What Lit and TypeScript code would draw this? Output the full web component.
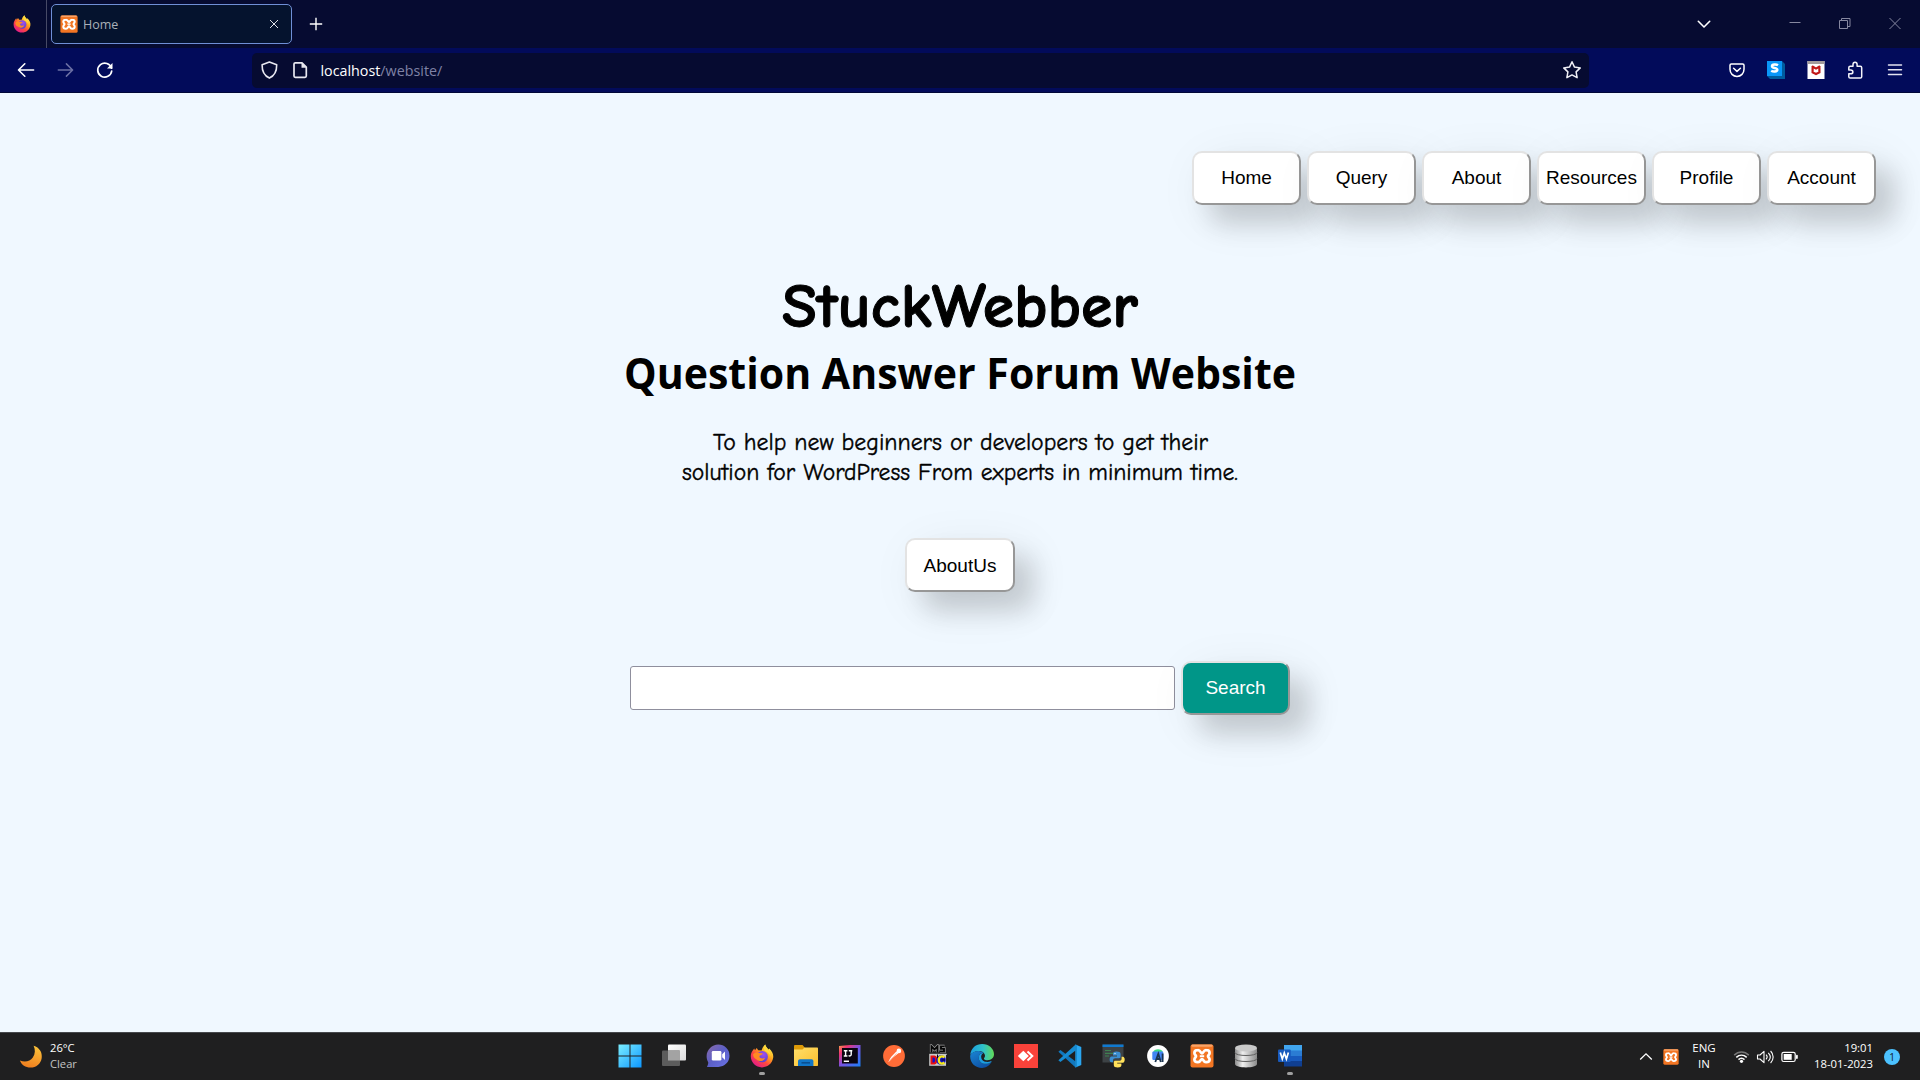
import { LitElement, html, css, svg } from "lit";
import { customElement, property } from "lit/decorators.js";

const icons: Record<string, unknown> = {
  firefox: svg`
    <defs>
      <linearGradient id="fx" x1="0.85" y1="0.1" x2="0.2" y2="0.95"><stop offset="0" stop-color="#fff44f"/><stop offset="0.35" stop-color="#ffa41c"/><stop offset="0.62" stop-color="#ff4a3d"/><stop offset="1" stop-color="#e2198b"/></linearGradient>
      <radialGradient id="fp" cx="0.6" cy="0.3" r="0.8"><stop offset="0" stop-color="#a04ff0"/><stop offset="1" stop-color="#4a3fc8"/></radialGradient>
    </defs>
    <path fill="url(#fx)" d="M2.2 7.2 4.2 4.4 5 6.2 6.7 4 8.2 6.2 11.6 6.4 C12.2 4 13.2 2.2 15.3 0.4 C15.6 2.6 16.8 3.6 18.6 5.4 L19.2 4.4 C22.4 7.6 23.6 10.4 23.2 13.6 C22.4 19.4 17.8 23.4 12 23.4 C5.800 23.4 1 18.600 0.8 12.600 C0.800 10.400 1.200 8.800 2.200 7.200Z"/>
    <circle cx="12.300" cy="12.700" r="5.600" fill="url(#fp)"/>
    <path fill="#ff8a22" d="M3 10.500 C5 8 7 8.200 8.800 9 L12.600 9.300 C12.800 10.500 11.200 11.200 9.800 11.500 L9.400 13 C10.200 14.400 12.600 15 15 13.800 C14.200 17.200 9.400 18.200 6.600 15.400 C4.800 15 3.200 13 3 10.500Z"/>
    <path fill="#ffd93b" d="M15.300 0.400 C15.600 3.600 20.600 6.200 20.600 12.500 C19.800 9.500 17.800 8.200 15.600 7.200 C13.200 6 13.600 3 15.300 0.400Z"/>`,
  xampp: svg`
    <rect x="0.500" y="0.500" width="23" height="23" rx="2" fill="#f37623"/><rect x="1.500" y="0.500" width="21" height="2.300" rx="1" fill="#f9a468"/>
    <path fill="none" stroke="#fff" stroke-width="2.700" stroke-linejoin="round" d="M7.800 6.200C10.600 6 10.600 9.400 12 9.400S13.400 6 16.200 6.200C18.400 6.200 19.600 7.300 19.600 9C19.600 10.800 18 11 18 12.200S19.600 13.700 19.600 15.500C19.600 17.200 18.400 18.200 16.200 18.200C13.400 18.400 13.400 15 12 15S10.600 18.400 7.800 18.200C5.600 18.200 4.400 17.200 4.400 15.500C4.400 13.700 6 13.400 6 12.200S4.400 10.800 4.400 9C4.400 7.300 5.600 6.200 7.800 6.200Z"/>
    <path stroke="#fff" stroke-width="2" d="M9.800 12.200H14.200"/>`,
  plus: svg`<path stroke="#fff" stroke-width="1.400" d="M12 5.800V18.200M5.800 12H18.200"/>`,
  tabclose: svg`<path stroke="#dfe2ea" stroke-width="1" d="M8 8 16 16M16 8 8 16"/>`,
  chevron: svg`<path fill="none" stroke="#fff" stroke-width="1.600" stroke-linecap="round" stroke-linejoin="round" d="M6.300 9.300 12 15 17.700 9.300"/>`,
  minimize: svg`<path stroke="#8688a0" d="M6.500 10.500H17.500"/>`,
  restore: svg`<path fill="none" stroke="#8688a0" d="M6.500 8.500H14.500V16.500H6.500ZM8.500 8.500V6.500H17V14.500H14.500"/>`,
  close: svg`<path stroke="#8688a0" d="M6.500 6 17.500 17M17.500 6 6.500 17"/>`,
  back: svg`<path fill="none" stroke="#fff" stroke-width="1.600" stroke-linecap="round" stroke-linejoin="round" d="M19.600 12H4.600M10.800 5.800 4.500 12 10.800 18.200"/>`,
  forward: svg`<path fill="none" stroke="#6b70a4" stroke-width="1.500" stroke-linecap="round" stroke-linejoin="round" d="M5.300 12H19.500M13.400 5.900 19.600 12 13.400 18.100"/>`,
  reload: svg`<path fill="none" stroke="#fff" stroke-width="1.700" stroke-linecap="round" d="M19.500 10.200A7 7 0 1 0 19.700 13"/><path fill="#fff" d="M20.500 5V10.600H15Z"/>`,
  shield: svg`<path fill="none" stroke="#e8e8f0" stroke-width="1.600" stroke-linejoin="round" d="M12.400 4 19.700 6.800C19.800 12.600 18.400 17.400 12.400 20.100C6.400 17.400 5 12.600 5.100 6.800Z"/>`,
  page: svg`<path fill="none" stroke="#e8e8f0" stroke-width="1.700" stroke-linejoin="round" d="M7.300 4.800H14L18.300 9V18C18.300 18.900 17.900 19.300 17 19.300H7.300C6.400 19.300 6 18.900 6 18V6.100C6 5.200 6.400 4.800 7.300 4.800Z"/><path fill="#e8e8f0" d="M13.500 4.500V9.700H18.500Z"/>`,
  star: svg`<path fill="none" stroke="#f0f0f6" stroke-width="1.500" stroke-linejoin="round" d="M12 3.800 14.500 9.100 20.300 9.900 16.100 13.900 17.100 19.700 12 16.900 6.900 19.700 7.900 13.900 3.700 9.900 9.500 9.100Z"/>`,
  pocket: svg`<path fill="none" stroke="#fff" stroke-width="1.500" stroke-linejoin="round" d="M6.300 5.900H17.700C18.600 5.900 19 6.300 19 7.200V11.300C19 15.400 16 18.400 12 18.400S5 15.400 5 11.300V7.200C5 6.300 5.400 5.900 6.300 5.900Z"/><path fill="none" stroke="#fff" stroke-width="1.500" stroke-linecap="round" stroke-linejoin="round" d="M8.600 10.300 12 13.400 15.400 10.300"/>`,
  sbox: svg`<path fill="#005c9e" d="M18 3 21 6V21H6L3 18Z"/><rect x="3" y="3" width="15" height="15" fill="#0996f8"/><path fill="none" stroke="#fff" stroke-width="2.500" d="M14 7.300C12.500 6.300 8 6.100 8 8.300C8 10.500 13.300 9.400 13.300 11.800C13.300 14 9 13.900 7.200 12.700"/>`,
  mcafee: svg`<rect x="3.500" y="3" width="17" height="18" fill="#fff"/><rect x="3.500" y="3" width="17" height="3" fill="#a39c9c"/><path fill="none" stroke="#c01818" stroke-width="2.200" d="M8.600 8V14.400L12 16.100 15.400 14.400V8M8 8.300 12 10.600 16 8.300"/>`,
  puzzle: svg`<path fill="none" stroke="#f4f4fa" stroke-width="1.500" stroke-linejoin="round" d="M10 8.300V6.600C10 3.400 14.100 3.400 14.100 6.600V8.300H17.300C18.200 8.300 18.700 8.800 18.700 9.700V18.800C18.700 19.700 18.200 20.100 17.300 20.100H7.200C6.300 20.100 5.800 19.700 5.800 18.800V15.800H7.700C10.600 15.800 10.600 12 7.700 12H5.800V9.700C5.800 8.800 6.300 8.300 7.200 8.300Z"/>`,
  menu: svg`<path stroke="#e4e4f0" stroke-width="1.500" stroke-linecap="round" d="M5.500 7H18.500M5.500 11.700H18.500M5.500 16.400H18.500"/>`,
  windows: svg`<defs><linearGradient id="wn" x1="0" y1="0" x2="24" y2="24" gradientUnits="userSpaceOnUse"><stop offset="0" stop-color="#7df0ff"/><stop offset="1" stop-color="#0a95ff"/></linearGradient></defs><path fill="url(#wn)" d="M0.500 0.500H11.500V11.500H0.500ZM12.500 0.500H23.500V11.500H12.500ZM0.500 12.500H11.500V23.500H0.500ZM12.500 12.500H23.500V23.500H12.500Z"/>`,
  taskview: svg`<defs><linearGradient id="tv" x1="0" y1="0" x2="1" y2="1"><stop offset="0" stop-color="#fff"/><stop offset="1" stop-color="#dcdcdc"/></linearGradient></defs><rect x="6" y="0.500" width="18" height="16" rx="1" fill="url(#tv)"/><rect x="0" y="6.500" width="18" height="15.500" rx="1" fill="#5c5c5c"/><rect x="6" y="6.500" width="12" height="10" fill="#a3a3a3"/>`,
  chat: svg`<defs><linearGradient id="ch" x1="0" y1="0" x2="1" y2="1"><stop offset="0" stop-color="#8a6aa8"/><stop offset="0.500" stop-color="#5b5fc7"/><stop offset="1" stop-color="#6b74e8"/></linearGradient></defs><path fill="url(#ch)" d="M12.300 0.500A11.200 11.200 0 1 1 12.300 22.900H1C1.800 21 2.400 20 2.200 18.200C-2.500 9.500 4 0.500 12.300 0.500Z"/><rect x="5.800" y="7" width="9.600" height="9.600" rx="1.300" fill="#fff"/><path fill="#fff" d="M16.200 10.300 19 7.600V16L16.200 13.300Z"/>`,
  folder: svg`<defs><linearGradient id="fo" x1="0" y1="0" x2="1" y2="1"><stop offset="0" stop-color="#ffdf6b"/><stop offset="1" stop-color="#fbbf2d"/></linearGradient></defs><path fill="#dd9a08" d="M0 2.200C0 1.300 0.500 0.900 1.200 0.900H8.500L10.500 3.200V8H0Z"/><path fill="url(#fo)" d="M0 5.600H8.500L10.500 3.400H23C23.700 3.400 24 3.800 24 4.500V21C24 21.700 23.700 22 23 22H1C0.300 22 0 21.700 0 21Z"/><path fill="#1176c8" d="M4 22V17.200C4 15.900 4.800 15.200 6 15.200H17.500C18.700 15.200 19.400 15.900 19.400 17.200V22Z"/><path stroke="#0a4f91" stroke-width="1.600" d="M7.500 18.800H16"/>`,
  idea: svg`<defs><linearGradient id="ij" x1="0" y1="0" x2="1" y2="1"><stop offset="0" stop-color="#f9a14a"/><stop offset="0.220" stop-color="#f03472"/><stop offset="0.500" stop-color="#7a52e0"/><stop offset="1" stop-color="#1680f8"/></linearGradient></defs><path fill="url(#ij)" d="M1 2 12 1 22.500 1V22.500H1Z"/><rect x="4" y="4" width="15.800" height="15.500" fill="#0a0410"/><path fill="none" stroke="#fff" stroke-width="1.400" d="M5.800 6.700H9.400M7.600 6.700V12M5.800 12H9.400M10.800 6.700H14.300M13.200 6.700V10.600C13.200 12.200 11.500 12.200 10.600 11.500M5.800 17.300H11"/>`,
  postman: svg`<circle cx="12" cy="12" r="10.900" fill="#ff6c37"/><path fill="#fff" d="M9.300 12.700 14.600 7.300 16.400 9.200 10.300 14 6.300 18.200 7.800 14.900Z"/><circle cx="16.900" cy="6.900" r="2.300" fill="#fff"/><path stroke="#ffb69a" stroke-width="0.800" d="M7 17.500 14.500 9.400"/>`,
  msdos: svg`<path stroke="#a2a2a2" stroke-width="3.200" fill="none" d="M5.500 8.300V2.300L8.500 5.300 11.500 2.300V8.300M18.500 2.400H15V4.900H18V7.500H14"/><path stroke="#060606" stroke-width="1.900" fill="none" d="M5.500 8.500V2.300L8.500 5.300 11.500 2.300V8.500M18.500 2.400H15V4.900H18V7.500H14"/><rect x="3.200" y="9.800" width="17.500" height="12" fill="#c9c9c9"/><path fill="#e80f10" d="M4.500 11.500H8.500C12.500 12 12.500 20 8.500 20.500H4.500Z"/><path fill="#1010c8" d="M6.500 13.500H8C9.500 14 9.500 18 8 18.500H6.500Z"/><circle cx="15" cy="16" r="4.800" fill="#1010c8"/><path fill="none" stroke="#f5ea18" stroke-width="2.300" d="M18.500 13.500C16 11.300 12.800 12.500 12.800 16S16 20.500 18.500 18.500"/><path stroke="#080808" stroke-width="1" d="M15.500 16H19M20.700 11V22M11.500 10.500V14"/>`,
  edge: svg`<defs><linearGradient id="eg" x1="0" y1="0.300" x2="1" y2="0.300"><stop offset="0" stop-color="#1b9de2"/><stop offset="0.550" stop-color="#2fc2c8"/><stop offset="1" stop-color="#62da56"/></linearGradient><linearGradient id="eb" x1="0" y1="0" x2="0.700" y2="1"><stop offset="0" stop-color="#1a86d4"/><stop offset="1" stop-color="#0d4ea2"/></linearGradient></defs><path fill="url(#eg)" d="M0.200 11C1 4 6 0.100 12.200 0.100C19 0.100 24 5 24 10.300C24 14 21 16.200 17.700 16.200C15.300 16.200 13.800 15.300 13.900 14.400C14 13.800 15 13.300 15 11.700C15 9.200 12.500 6.900 9 6.900C5 6.900 1.800 8.600 0.200 11Z"/><path fill="url(#eb)" d="M0.200 11.500C1.500 8.600 5 7 8.700 7C10.500 7 12.500 8 13.500 9C10.500 8.700 8.500 11 8.700 14C9 19 15 22 21.500 18C19.500 21.700 16 23.900 12 23.900C5 23.900-0.300 18.400 0.200 11.500Z"/><path fill="#1b9de2" d="M8.700 14C9 19 15 22 21.500 18C21.800 17.500 21.300 17 20.900 17.200C16.500 19 11.500 17.500 11.200 13C11 11.500 11.800 10 13.500 9C10.500 8.700 8.500 11 8.700 14Z"/>`,
  anydesk: svg`<rect width="24" height="24" fill="#f9423a"/><path fill="#fff" d="M3.800 12 9.300 6.800 14.800 12 9.300 17.200Z"/><path fill="none" stroke="#fff" stroke-width="2" d="M13.500 7.500 18.300 12 13.500 16.500"/>`,
  vscode: svg`<path fill="#1177bd" d="M0.400 7.700 2.400 6 17.600 17.500V23.500Z"/><path fill="#168bd2" d="M0.400 16.300 17.600 0.500V6.500L2.400 18Z"/><path fill="#2aa6f0" d="M17.500 0.400 23.300 3V21L17.500 23.600Z"/><path fill="#168bd2" d="M17.500 0.500 19 1.200V22.800L17.500 23.500Z"/>`,
  python: svg`<rect x="0.500" y="0.500" width="21" height="18" fill="#3d4245"/><rect x="0.500" y="0.500" width="21" height="2.500" fill="#0f79d0"/><path stroke="#3f8050" stroke-width="1.200" d="M3 6.500H9M3 9.300H12M3 12H7"/><path fill="#3b8ed0" d="M14.500 7.500C11.500 7.500 11 8.500 11 10V11.500H15V12.500H9.500C7 12.500 7.200 18.300 9.300 18.300H11V16.500C11 15 12 14.200 13.300 14.200H17C18.200 14.200 18.600 13.500 18.600 12.500V10C18.600 8.200 17 7.500 14.500 7.500Z"/><path fill="#ffe15a" d="M15.700 23.600C18.700 23.600 19.400 22.600 19.400 21.100V19.600H15.200V18.700H20.800C23.400 18.700 23.300 12.800 20.900 12.800H19.600V14.700C19.600 16.200 18.600 16.700 17.300 16.700H13.500C12.300 16.700 11.800 17.400 11.800 18.400V21.100C11.800 22.900 13.300 23.600 15.700 23.600Z"/><circle cx="13" cy="9.600" r="0.700" fill="#fff"/>`,
  android: svg`<circle cx="12" cy="12" r="10.900" fill="#fff"/><path fill="#3ddc84" d="M7.200 8.500C7.500 4.200 16.500 4.200 16.800 8.500Z"/><rect x="6.300" y="7.500" width="11" height="8.500" rx="1.200" fill="#4285f4"/><path fill="none" stroke="#1c3550" stroke-width="1.800" d="M9.300 18 12.300 9.800 14.800 18M10 15H14M16.600 9.500V18"/>`,
  database: svg`<defs><linearGradient id="db"><stop offset="0" stop-color="#8c8c8c"/><stop offset="0.350" stop-color="#efefef"/><stop offset="1" stop-color="#8a8a8a"/></linearGradient></defs><path fill="url(#db)" d="M1 4V20C1 24.500 23 24.500 23 20V4Z"/><ellipse cx="12" cy="4" rx="11" ry="3.400" fill="#c9c9c9"/><path fill="none" stroke="#606060" stroke-width="1" d="M1 8.500C1 12.500 23 12.500 23 8.500M1 14.500C1 18.500 23 18.500 23 14.500"/>`,
  word: svg`<path fill="#41a5ee" d="M6 1H24V7H6Z"/><path fill="#2b7cd3" d="M6 6.500H24V12H6Z"/><path fill="#185abd" d="M6 12H24V17.500H6Z"/><path fill="#103f91" d="M6 17H24V22.500H6Z"/><rect x="0" y="5.500" width="12.700" height="12.500" rx="1" fill="#185abd"/><path fill="none" stroke="#fff" stroke-width="1.700" d="M2.300 8.500 4.300 15 6.300 9 8.400 15 10.400 8.500"/>`,
  moon: svg`<defs><linearGradient id="mn" x1="0.700" y1="0" x2="0.400" y2="1"><stop offset="0" stop-color="#fbc23a"/><stop offset="1" stop-color="#f07f1f"/></linearGradient></defs><path fill="url(#mn)" d="M14.600 0.800C20.500 2.500 23.500 7.500 22.700 13C21.800 19 17 22.600 11.500 22.600C6.500 22.600 2.500 19.800 0.900 15.500C6 17.500 11 16.500 13.800 12.500C16.300 9 16.500 4.500 14.600 0.800Z"/>`,
  up: svg`<path fill="none" stroke="#fff" stroke-width="1.300" d="M6.200 14.500 12 8.800 17.800 14.500"/>`,
  wifi: svg`<g fill="none" stroke-width="1.500"><path stroke="#777" d="M5.200 10.100C9.500 5.900 15.500 5.900 19.800 10.100"/><path stroke="#fff" d="M7.300 12.400C10.400 9.500 14.600 9.500 17.700 12.400M9.500 14.600C11.300 13 13.700 13 15.500 14.600"/></g><circle cx="12.500" cy="16.300" r="1.600" fill="#fff"/>`,
  sound: svg`<path fill="none" stroke="#fff" stroke-width="1.100" stroke-linejoin="round" d="M4.500 10H7L11 6.300V17.700L7 14H4.500ZM13 9.700C14.300 11 14.300 13 13 14.300M15.300 7.800C17.700 10.300 17.700 13.700 15.300 16.200M17.600 6C21 9.500 21 14.500 17.600 18"/>`,
  battery: svg`<rect x="4.900" y="7.300" width="13.300" height="9.200" rx="1.800" fill="none" stroke="#fff" stroke-width="1.200"/><rect x="6.700" y="9" width="8" height="5.800" fill="#fff"/><path stroke="#fff" stroke-width="1.800" stroke-linecap="round" d="M19.900 10.700V13"/>`,
};

@customElement("ui-icon")
class UiIcon extends LitElement {
  static styles = css`
    :host { display: block; flex: none; width: 24px; height: 24px; }
    svg { display: block; width: 100%; height: 100%; }
  `;
  @property() name = "";
  render() {
    return html`<svg viewBox="0 0 24 24">${icons[this.name]}</svg>`;
  }
}

@customElement("app-root")
class AppRoot extends LitElement {
  static styles = css`
    :host {
      display: flex;
      flex-direction: column;
      width: 1920px;
      height: 1080px;
      overflow: hidden;
      font-family: "Open Sans", "Noto Sans", sans-serif;
      background: #f0f8ff;
    }
    * { box-sizing: border-box; }
    .tabs { display: flex; align-items: center; height: 48px; background: #060b31; flex: none; }
    .view { display: flex; align-items: center; justify-content: center; width: 47px; height: 48px; padding-right: 3px; border-right: 1px solid #474a66; }
    .s18 { width: 18px; height: 18px; }
    .tab { display: flex; align-items: center; width: 241px; height: 40px; margin: 0 0 0 4px; padding: 0 5px 0 8px; border: 1px solid #6f8fd6; border-radius: 5px; background: #05132e; color: #aab0b8; font-size: 12.500px; }
    .tab .label { flex: 1; padding-left: 5px; padding-top: 1px; }
    .newtab { margin-left: 12px; }
    .chev { margin-left: auto; margin-right: 67px; }
    .win { margin-left: 0; margin-right: 26px; }
    .win.last { margin-right: 13px; }
    .bar { display: flex; align-items: center; height: 45px; padding: 0 6px; background: #020b5a; border-bottom: 1px solid #010838; flex: none; }
    .cell { width: 39.400px; display: flex; justify-content: center; flex: none; }
    .url { display: flex; align-items: center; width: 1337px; height: 35px; margin: 0 128.300px 0 127.800px; padding: 0 5px; border-radius: 5px; background: #060b31; font-size: 14.300px; color: #7f82a5; flex: none; }
    .url b { font-weight: 400; color: #fff; }
    .url .page { margin-left: 7px; margin-right: 8.500px; }
    .url .addr { flex: 1; padding-top: 1px; }
    main { flex: 1; display: flex; flex-direction: column; align-items: center; background: #f0f8ff; }
    nav { display: flex; align-self: flex-end; gap: 6px; padding: 58px 44px 0 0; }
    .btn { width: 109px; height: 54px; padding: 0; border: 2px solid; border-color: #e3e3e3 #979797 #979797 #e3e3e3; border-radius: 10px; background: #fff; color: #000; font: 19px "Liberation Sans", Arial, sans-serif; white-space: nowrap; box-shadow: 19px 19px 26px rgba(0, 0, 0, 0.150), 12px 12px 50px rgba(0, 0, 0, 0.080); }
    .btn.go { background: #009688; color: #fff; }
    h1, h2, p { margin: 0; }
    svg { display: block; overflow: visible; }
    h1 { margin-top: 35px; margin-bottom: -8px; }
    .btn.about { width: 110px; margin-top: 38px; padding-top: 2px; }
    .search { display: flex; align-items: center; gap: 6px; margin-top: 69px; }
    .search input { width: 545px; height: 44px; border: 1px solid #8f8f9d; border-radius: 3px; background: #fff; padding: 0 8px; margin: 0; }
    .title { font-family: "Comic Sans MS", "Comic Neue", "Open Sans", sans-serif; font-weight: 600; font-size: 62px; stroke: #000; stroke-width: 1px; stroke-linejoin: round; }
    .sub { font-weight: 700; font-size: 43px; }
    .lead { font-family: "Comic Sans MS", "Comic Neue", "Open Sans", sans-serif; font-size: 25px; stroke: #000; stroke-width: 0.400px; stroke-linejoin: round; }
    .task { display: grid; grid-template-columns: 1fr auto 1fr; height: 48px; flex: none; background: #1f1f20; border-top: 1px solid #46484c; color: #fff; font-size: 11.200px; line-height: 16px; }
    .weather { display: flex; align-items: center; padding-left: 19px; gap: 7px; }
    .words { padding-bottom: 2px; }
    .dim { color: #c4c4c4; }
    .apps { display: flex; padding-left: 0; }
    .app { display: flex; flex-direction: column; align-items: center; width: 44px; padding-top: 11px; }
    .run { width: 6px; height: 3px; margin-top: 4px; border-radius: 2px; background: #a0a0a0; }
    .tray { display: flex; align-items: center; justify-content: flex-end; padding-right: 20px; }
    .lang { width: 40px; margin: 0 5px 0 5.500px; padding-bottom: 1px; text-align: center; font-size: 11.500px; }
    .s16 { width: 16px; height: 16px; margin-left: 5px; }
    .clock { width: 68px; margin-left: 4px; padding-bottom: 2px; text-align: right; font-size: 11.300px; }
    .note { display: flex; align-items: center; justify-content: center; width: 16px; height: 16px; margin-left: 11px; border-radius: 50%; background: #4cc2ff; color: #10202c; font-size: 10px; }
  `;

  private menu = ["Home", "Query", "About", "Resources", "Profile", "Account"];
  private apps = ["windows", "taskview", "chat", "firefox", "folder", "idea", "postman", "msdos", "edge", "anydesk", "vscode", "python", "android", "xampp", "database", "word"];
  private running = ["firefox", "word"];

  render() {
    const cell = (n: string) => html`<div class="cell"><ui-icon name=${n}></ui-icon></div>`;
    return html`
      <div class="tabs">
        <div class="view"><ui-icon class="s18" name="firefox"></ui-icon></div>
        <div class="tab">
          <ui-icon class="s18" name="xampp"></ui-icon>
          <span class="label">Home</span>
          <ui-icon name="tabclose"></ui-icon>
        </div>
        <ui-icon class="newtab" name="plus"></ui-icon>
        <ui-icon class="chev" name="chevron"></ui-icon>
        <ui-icon class="win" name="minimize"></ui-icon>
        <ui-icon class="win" name="restore"></ui-icon>
        <ui-icon class="win last" name="close"></ui-icon>
      </div>
      <div class="bar">
        ${cell("back")}${cell("forward")}${cell("reload")}
        <div class="url">
          <ui-icon name="shield"></ui-icon>
          <ui-icon class="page" name="page"></ui-icon>
          <span class="addr"><b>localhost</b>/website/</span>
          <ui-icon name="star"></ui-icon>
        </div>
        ${cell("pocket")}${cell("sbox")}${cell("mcafee")}${cell("puzzle")}${cell("menu")}
      </div>
      <main>
        <nav>${this.menu.map((m) => html`<button class="btn">${m}</button>`)}</nav>
        <h1><svg width="720" height="108"><text class="title" x="182" y="87" textLength="356" lengthAdjust="spacingAndGlyphs">StuckWebber</text></svg></h1>
        <h2><svg width="720" height="64"><text class="sub" x="24" y="48.500" textLength="672" lengthAdjust="spacingAndGlyphs">Question Answer Forum Website</text></svg></h2>
        <p><svg width="720" height="96">
          <text class="lead" x="113" y="46" textLength="495" lengthAdjust="spacingAndGlyphs">To help new beginners or developers to get their</text>
          <text class="lead" x="82" y="76" textLength="556" lengthAdjust="spacingAndGlyphs">solution for WordPress From experts in minimum time.</text>
        </svg></p>
        <button class="btn about">AboutUs</button>
        <div class="search"><input aria-label="Search" /><button class="btn go">Search</button></div>
      </main>
      <div class="task">
        <div class="weather">
          <ui-icon name="moon"></ui-icon>
          <div class="words"><div>26°C</div><div class="dim">Clear</div></div>
        </div>
        <div class="apps">
          ${this.apps.map((a) => html`<div class="app"><ui-icon name=${a}></ui-icon>${this.running.includes(a) ? html`<div class="run"></div>` : ""}</div>`)}
        </div>
        <div class="tray">
          <ui-icon name="up"></ui-icon>
          <ui-icon class="s16" name="xampp"></ui-icon>
          <div class="lang">ENG<br />IN</div>
          <ui-icon name="wifi"></ui-icon>
          <ui-icon name="sound"></ui-icon>
          <ui-icon name="battery"></ui-icon>
          <div class="clock">19:01<br />18-01-2023</div>
          <div class="note">1</div>
        </div>
      </div>
    `;
  }
}
